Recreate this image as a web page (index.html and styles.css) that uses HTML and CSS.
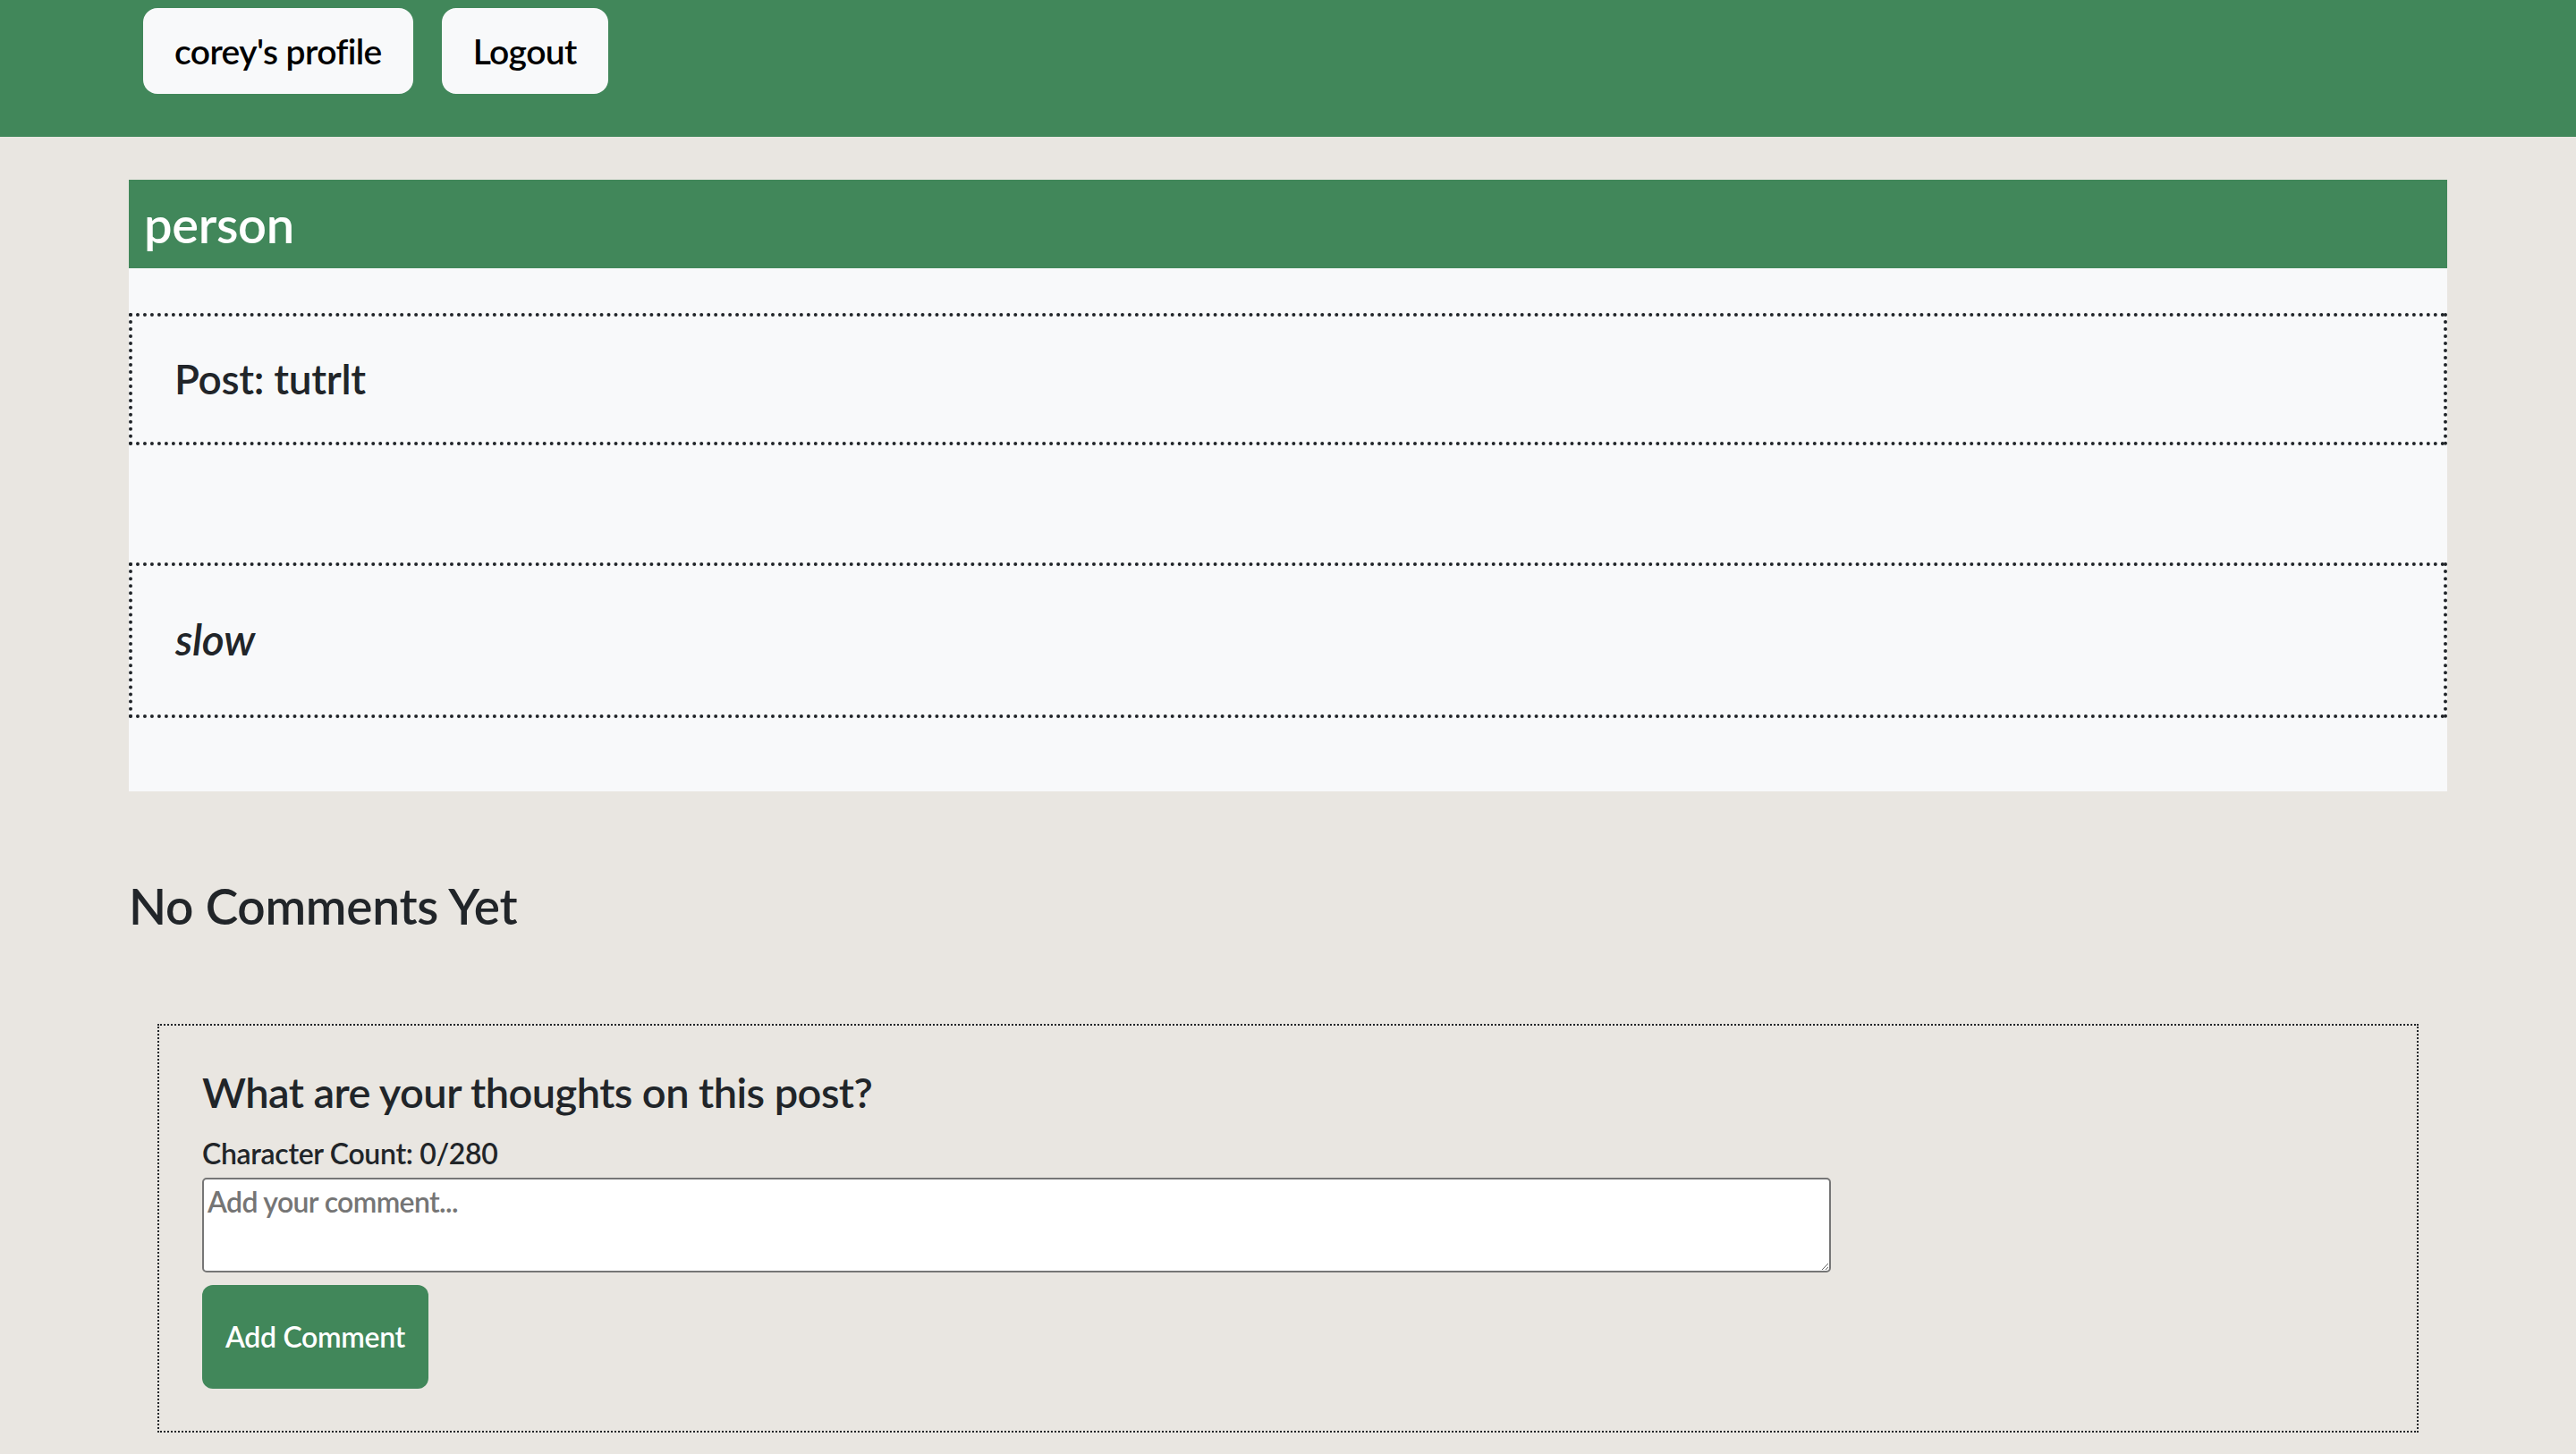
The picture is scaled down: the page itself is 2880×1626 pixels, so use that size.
FILE: index.html
```html
<!DOCTYPE html>
<html lang="en">
<head>
<meta charset="utf-8">
<title>Post</title>
<link rel="stylesheet" href="styles.css">
</head>
<body>
<header class="topbar">
  <button class="nav-btn">corey's profile</button>
  <button class="nav-btn">Logout</button>
</header>
<main>
  <section class="card">
    <div class="card-header"><h1 class="author">person</h1></div>
    <div class="card-body">
      <div class="post-box"><h3 class="post-title">Post: tutrlt</h3></div>
      <div class="post-box body-box"><p class="post-text">slow</p></div>
    </div>
  </section>
  <h2 class="no-comments">No Comments Yet</h2>
  <form class="comment-form">
    <h3 class="form-title">What are your thoughts on this post?</h3>
    <div class="char-count">Character Count: 0/280</div>
    <textarea class="comment-input" placeholder="Add your comment..."></textarea>
    <button type="button" class="add-btn">Add Comment</button>
  </form>
</main>
</body>
</html>
```
FILE: styles.css
```css
html, body {
  margin: 0;
  padding: 0;
}
body {
  background: #e9e6e1;
  font-family: Lato, "Liberation Sans", sans-serif;
  font-weight: 600;
  letter-spacing: -0.02em;
  color: #212529;
}
.topbar {
  background: #41875a;
  height: 153px;
  box-sizing: border-box;
  padding: 9px 0 0 160px;
  display: flex;
  align-items: flex-start;
  gap: 32px;
}
.nav-btn {
  height: 96px;
  padding: 0 35px;
  border: none;
  border-radius: 16px;
  background: #f8f9fa;
  color: #000;
  font-family: Lato, "Liberation Sans", sans-serif;
  font-size: 39px;
  font-weight: 600;
  letter-spacing: -0.015em;
}
.card {
  width: 90%;
  margin: 48px auto 0;
}
.card-header {
  background: #41875a;
  height: 99px;
  padding-left: 17px;
  display: flex;
  align-items: center;
}
.author {
  margin: 0;
  color: #fff;
  font-size: 56px;
  font-weight: 600;
  line-height: 1.2;
}
.card-body {
  background: #f8f9fa;
  padding: 50px 0 82px;
}
.post-box {
  border: 4px dotted #212529;
  padding: 42px 47px 43px;
}
.post-title {
  margin: 0;
  font-size: 46px;
  font-weight: 600;
  line-height: 1.2;
}
.body-box {
  margin-top: 131px;
  padding: 53px 48px 55px;
}
.post-text {
  margin: 0;
  font-size: 48px;
  font-style: italic;
  line-height: 1.2;
}
.no-comments {
  width: 90%;
  margin: 95px auto 0;
  font-size: 55px;
  font-weight: 600;
  letter-spacing: -0.005em;
  line-height: 1.2;
}
.comment-form {
  margin: 99px 176px 0;
  border: 2px dotted #212529;
  padding: 46px 48px 47px;
}
.form-title {
  margin: 0;
  font-size: 47px;
  font-weight: 600;
  letter-spacing: -0.012em;
  line-height: 1.2;
}
.char-count {
  margin-top: 22px;
  font-size: 32px;
  line-height: 1.2;
}
.comment-input {
  display: block;
  box-sizing: border-box;
  width: 75%;
  height: 106px;
  margin-top: 7px;
  border: 2px solid #767676;
  border-radius: 5px;
  padding: 4px 4px;
  font-family: Lato, "Liberation Sans", sans-serif;
  font-size: 32px;
  font-weight: 600;
  letter-spacing: -0.02em;
  line-height: 1.3;
  color: #212529;
  background: #fff;
}
.comment-input::placeholder {
  color: #757575;
}
.add-btn {
  display: block;
  margin-top: 14px;
  height: 116px;
  padding: 0 26px;
  border: none;
  border-radius: 12px;
  background: #41875a;
  color: #fff;
  font-family: Lato, "Liberation Sans", sans-serif;
  font-size: 32px;
  font-weight: 600;
  letter-spacing: -0.01em;
}
```
